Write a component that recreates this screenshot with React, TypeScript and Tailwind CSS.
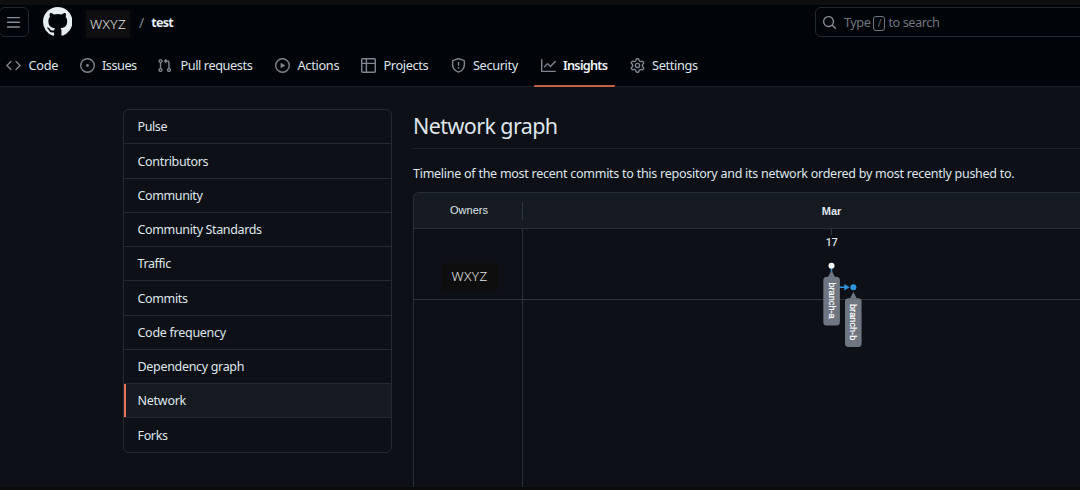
import React from "react";

const PATHS = {
  bars: "M1 2.75A.75.75 0 0 1 1.75 2h12.5a.75.75 0 0 1 0 1.5H1.75A.75.75 0 0 1 1 2.75Zm0 5A.75.75 0 0 1 1.75 7h12.5a.75.75 0 0 1 0 1.5H1.75A.75.75 0 0 1 1 7.75ZM1.75 12h12.5a.75.75 0 0 1 0 1.5H1.75a.75.75 0 0 1 0-1.5Z",
  code: "m11.28 3.22 4.25 4.25a.75.75 0 0 1 0 1.06l-4.25 4.25a.749.749 0 0 1-1.275-.326.749.749 0 0 1 .215-.734L13.94 8l-3.72-3.72a.749.749 0 0 1 .326-1.275.749.749 0 0 1 .734.215Zm-6.56 0a.751.751 0 0 1 1.042.018.751.751 0 0 1 .018 1.042L2.06 8l3.72 3.72a.749.749 0 0 1-.326 1.275.749.749 0 0 1-.734-.215L.47 8.53a.75.75 0 0 1 0-1.06Z",
  issue: "M8 9.5a1.5 1.5 0 1 0 0-3 1.5 1.5 0 0 0 0 3ZM8 0a8 8 0 1 1 0 16A8 8 0 0 1 8 0ZM1.5 8a6.5 6.5 0 1 0 13 0 6.5 6.5 0 0 0-13 0Z",
  pull: "M1.5 3.25a2.25 2.25 0 1 1 3 2.122v5.256a2.251 2.251 0 1 1-1.5 0V5.372A2.25 2.25 0 0 1 1.5 3.25Zm5.677-.177L9.573.677A.25.25 0 0 1 10 .854V2.5h1A2.5 2.5 0 0 1 13.5 5v5.628a2.251 2.251 0 1 1-1.5 0V5a1 1 0 0 0-1-1h-1v1.646a.25.25 0 0 1-.427.177L7.177 3.427a.25.25 0 0 1 0-.354ZM3.75 2.5a.75.75 0 1 0 0 1.5.75.75 0 0 0 0-1.5Zm0 9.5a.75.75 0 1 0 0 1.5.75.75 0 0 0 0-1.5Zm8.25.75a.75.75 0 1 0 1.5 0 .75.75 0 0 0-1.5 0Z",
  play: "M8 0a8 8 0 1 1 0 16A8 8 0 0 1 8 0ZM1.5 8a6.5 6.5 0 1 0 13 0 6.5 6.5 0 0 0-13 0Zm4.879-2.773 4.264 2.559a.25.25 0 0 1 0 .428l-4.264 2.559A.25.25 0 0 1 6 10.559V5.442a.25.25 0 0 1 .379-.215Z",
  table: "M0 1.75C0 .784.784 0 1.75 0h12.5C15.216 0 16 .784 16 1.75v12.5A1.75 1.75 0 0 1 14.25 16H1.75A1.75 1.75 0 0 1 0 14.25ZM6.5 6.5v8h7.75a.25.25 0 0 0 .25-.25V6.5Zm8-1.5V1.75a.25.25 0 0 0-.25-.25H6.5V5Zm-13 1.5v7.75c0 .138.112.25.25.25H5v-8ZM5 5V1.5H1.75a.25.25 0 0 0-.25.25V5Z",
  shield: "M7.467.133a1.748 1.748 0 0 1 1.066 0l5.25 1.68A1.75 1.75 0 0 1 15 3.48V7c0 1.566-.32 3.182-1.303 4.682-.983 1.498-2.585 2.813-5.032 3.855a1.697 1.697 0 0 1-1.33 0c-2.447-1.042-4.049-2.357-5.032-3.855C1.32 10.182 1 8.566 1 7V3.48a1.75 1.75 0 0 1 1.217-1.667Zm.61 1.429a.25.25 0 0 0-.153 0l-5.25 1.68a.25.25 0 0 0-.174.238V7c0 1.358.275 2.666 1.057 3.86.784 1.194 2.121 2.34 4.366 3.297a.196.196 0 0 0 .154 0c2.245-.956 3.582-2.104 4.366-3.298C13.225 9.666 13.5 8.36 13.5 7V3.48a.251.251 0 0 0-.174-.237l-5.25-1.68ZM8.75 4.75v3a.75.75 0 0 1-1.5 0v-3a.75.75 0 0 1 1.5 0ZM9 10.5a1 1 0 1 1-2 0 1 1 0 0 1 2 0Z",
  graph: "M1.5 1.75V13.5h13.75a.75.75 0 0 1 0 1.5H.75a.75.75 0 0 1-.75-.75V1.75a.75.75 0 0 1 1.5 0Zm14.28 2.53-5.25 5.25a.75.75 0 0 1-1.06 0L7 7.06 4.28 9.78a.751.751 0 0 1-1.042-.018.751.751 0 0 1-.018-1.042l3.25-3.25a.75.75 0 0 1 1.06 0L10 7.94l4.72-4.72a.751.751 0 0 1 1.042.018.751.751 0 0 1 .018 1.042Z",
  gear: "M8 0a8.2 8.2 0 0 1 .701.031C9.444.095 9.99.645 10.16 1.29l.288 1.107c.018.066.079.158.212.224.231.114.454.243.668.386.123.082.233.09.299.071l1.103-.303c.644-.176 1.392.021 1.82.63.27.385.506.792.704 1.218.315.675.111 1.422-.364 1.891l-.814.806c-.049.048-.098.147-.088.294.016.257.016.515 0 .772-.01.147.038.246.088.294l.814.806c.475.469.679 1.216.364 1.891a7.977 7.977 0 0 1-.704 1.217c-.428.61-1.176.807-1.82.63l-1.102-.302c-.067-.019-.177-.011-.3.071a5.909 5.909 0 0 1-.668.386c-.133.066-.194.158-.211.224l-.29 1.106c-.168.646-.715 1.196-1.458 1.26a8.006 8.006 0 0 1-1.402 0c-.743-.064-1.289-.614-1.458-1.26l-.289-1.106c-.018-.066-.079-.158-.212-.224a5.738 5.738 0 0 1-.668-.386c-.123-.082-.233-.09-.299-.071l-1.103.303c-.644.176-1.392-.021-1.82-.63a8.12 8.12 0 0 1-.704-1.218c-.315-.675-.111-1.422.363-1.891l.815-.806c.05-.048.098-.147.088-.294a6.214 6.214 0 0 1 0-.772c.01-.147-.038-.246-.088-.294l-.815-.806C.635 6.045.431 5.298.746 4.623a7.92 7.92 0 0 1 .704-1.217c.428-.61 1.176-.807 1.82-.63l1.102.302c.067.019.177.011.3-.071.214-.143.437-.272.668-.386.133-.066.194-.158.211-.224l.29-1.106C6.009.645 6.556.095 7.299.03 7.53.01 7.764 0 8 0Zm-.571 1.525c-.036.003-.108.036-.137.146l-.289 1.105c-.147.561-.549.967-.998 1.189-.173.086-.34.183-.5.29-.417.278-.97.423-1.529.27l-1.103-.303c-.109-.03-.175.016-.195.045-.22.312-.412.644-.573.99-.014.031-.021.11.059.19l.815.806c.411.406.562.957.53 1.456a4.709 4.709 0 0 0 0 .582c.032.499-.119 1.05-.53 1.456l-.815.806c-.081.08-.073.159-.059.19.162.346.353.677.573.989.02.03.085.076.195.046l1.102-.303c.56-.153 1.113-.008 1.53.27.161.107.328.204.501.29.447.222.85.629.997 1.189l.289 1.105c.029.109.101.143.137.146a6.6 6.6 0 0 0 1.142 0c.036-.003.108-.036.137-.146l.289-1.105c.147-.561.549-.967.998-1.189.173-.086.34-.183.5-.29.417-.278.97-.423 1.529-.27l1.103.303c.109.029.175-.016.195-.045.22-.313.411-.644.573-.99.014-.031.021-.11-.059-.19l-.815-.806c-.411-.406-.562-.957-.53-1.456a4.709 4.709 0 0 0 0-.582c-.032-.499.119-1.05.53-1.456l.815-.806c.081-.08.073-.159.059-.19a6.464 6.464 0 0 0-.573-.989c-.02-.03-.085-.076-.195-.046l-1.102.303c-.56.153-1.113.008-1.53-.27a4.44 4.44 0 0 0-.501-.29c-.447-.222-.85-.629-.997-1.189l-.289-1.105c-.029-.11-.101-.143-.137-.146a6.6 6.6 0 0 0-1.142 0ZM11 8a3 3 0 1 1-6 0 3 3 0 0 1 6 0ZM9.5 8a1.5 1.5 0 1 0-3.001.001A1.5 1.5 0 0 0 9.5 8Z",
  mark: "M8 0c4.42 0 8 3.58 8 8a8.013 8.013 0 0 1-5.45 7.59c-.4.08-.55-.17-.55-.38 0-.27.01-1.13.01-2.2 0-.75-.25-1.23-.54-1.48 1.78-.2 3.65-.88 3.65-3.95 0-.88-.31-1.59-.82-2.15.08-.2.36-1.02-.08-2.12 0 0-.67-.22-2.2.82-.64-.18-1.32-.27-2-.27-.68 0-1.36.09-2 .27-1.53-1.03-2.2-.82-2.2-.82-.44 1.1-.16 1.92-.08 2.12-.51.56-.82 1.28-.82 2.15 0 3.06 1.86 3.75 3.64 3.95-.23.2-.44.55-.51 1.07-.46.21-1.61.55-2.33-.66-.15-.24-.6-.83-1.23-.82-.67.01-.27.38.01.53.34.19.73.9.82 1.13.16.45.68 1.31 2.69.94 0 .67.01 1.3.01 1.49 0 .21-.15.45-.55.38A7.995 7.995 0 0 1 0 8c0-4.42 3.58-8 8-8Z",
  search: "M10.68 11.74a6 6 0 0 1-7.922-8.982 6 6 0 0 1 8.982 7.922l3.04 3.04a.749.749 0 0 1-.326 1.275.749.749 0 0 1-.734-.215ZM11.5 7a4.499 4.499 0 1 0-8.997 0A4.499 4.499 0 0 0 11.5 7Z",
};

function Icon({ name, className }: { name: keyof typeof PATHS; className: string }) {
  return (
    <svg viewBox="0 0 16 16" fill="currentColor" className={`shrink-0 ${className}`}>
      <path d={PATHS[name]} />
    </svg>
  );
}

type Tab = { label: string; icon: keyof typeof PATHS; box: string; text: string; active?: boolean };

const tabs: Tab[] = [
  { label: "Code", icon: "code", box: "w-[73.5px]", text: "tracking-[-0.25px]" },
  { label: "Issues", icon: "issue", box: "w-[77.5px]", text: "tracking-[-0.5px]" },
  { label: "Pull requests", icon: "pull", box: "w-[118px]", text: "tracking-[-0.43px] pl-px" },
  { label: "Actions", icon: "play", box: "w-[86px]", text: "tracking-[-0.3px]" },
  { label: "Projects", icon: "table", box: "w-[89.5px]", text: "tracking-[-0.38px]" },
  { label: "Security", icon: "shield", box: "w-[90px]", text: "tracking-[-0.38px]" },
  { label: "Insights", icon: "graph", box: "w-[89px]", text: "tracking-[-0.75px] font-semibold text-[#eef3f8]", active: true },
  { label: "Settings", icon: "gear", box: "w-[90px]", text: "tracking-[-0.35px]" },
];

const menu = [
  { label: "Pulse", text: "tracking-[-0.4px]" },
  { label: "Contributors", text: "tracking-[-0.33px]" },
  { label: "Community", text: "tracking-[-0.38px]" },
  { label: "Community Standards", text: "tracking-[-0.36px]" },
  { label: "Traffic", text: "tracking-[-0.4px]" },
  { label: "Commits", text: "tracking-[-0.35px]" },
  { label: "Code frequency", text: "tracking-[-0.28px]" },
  { label: "Dependency graph", text: "tracking-[-0.32px]" },
  { label: "Network", text: "tracking-[-0.25px]", active: true },
  { label: "Forks", text: "tracking-[-0.35px]" },
];

function Header() {
  return (
    <header className="h-[87px] shrink-0 border-b border-[#1c2026] bg-[#010409]">
      <div className="h-[5px] bg-[#0e0e0e]" />
      <div className="flex h-[34px] items-center">
        <button className="-ml-[1.5px] flex h-[30px] w-[30px] shrink-0 items-center justify-center rounded-md border border-[#24282e]">
          <Icon name="bars" className="h-[15px] w-[15px] text-[#848d97]" />
        </button>
        <Icon name="mark" className="ml-[14px] h-[29.5px] w-[29.5px] text-[#e6edf3]" />
        <div className="ml-[14px] mt-[4px] flex h-[28px] w-[44px] items-center bg-[#0e0e0e] pl-[4px] text-[13.5px] font-light tracking-[0.4px] text-[#e4e4e4]">WXYZ</div>
        <span className="ml-[9px] mt-px text-[14px] text-[#7d8590]">/</span>
        <span className="ml-[7px] mt-[2px] text-[12.5px] font-bold tracking-[-0.7px] text-[#e6edf3]">test</span>
        <div className="-mr-3 ml-auto flex h-[30px] w-[277px] items-center rounded-md border border-[#25292f] pl-[6px] text-[12.75px] tracking-[-0.25px] text-[#6f7680]">
          <Icon name="search" className="h-[15px] w-[15px] text-[#848d97]" />
          <span className="ml-[7px] mt-px tracking-[-0.5px]">Type</span>
          <span className="ml-[3px] mt-[2px] flex h-[15px] w-[12px] items-center justify-center rounded-[3px] border border-[#6e7681] text-[10px]">/</span>
          <span className="ml-[3px] mt-px tracking-[-0.45px]">to search</span>
        </div>
      </div>
      <nav className="flex h-[48px] pl-[6px]">
        {tabs.map((t) => (
          <div key={t.label} className={`relative flex shrink-0 items-center pt-[5px] ${t.box}`}>
            <Icon name={t.icon} className="h-[15px] w-[15px] text-[#7d8590]" />
            <span className={`ml-[7.5px] whitespace-nowrap text-[12.75px] ${t.text}`}>{t.label}</span>
            {t.active && <div className="absolute bottom-0 left-[-7px] h-[2px] w-[81px] rounded-full bg-[#c65f48]" />}
          </div>
        ))}
      </nav>
    </header>
  );
}

function Sidebar() {
  return (
    <aside className="mt-[22px] ml-[123px] h-[344px] w-[269px] shrink-0 overflow-hidden rounded-md border border-[#252a31]">
      {menu.map((m, i) => (
        <div
          key={m.label}
          className={`flex items-center pt-[2px] pl-[13.5px] text-[12.5px] ${i ? "h-[34.25px] border-t border-[#252a31]" : "h-[33.4px]"} ${
            m.active ? "bg-[#161b22] shadow-[inset_2px_0_0_#e5705b]" : ""
          }`}
        >
          <span className={`whitespace-nowrap ${m.text}`}>{m.label}</span>
        </div>
      ))}
    </aside>
  );
}

function Graph() {
  return (
    <svg className="block h-[258px] w-[557px] shrink-0" viewBox="523 229 557 258">
      <path d="M831.5 229v6" stroke="#30363d" />
      <text x="831.7" y="246" textAnchor="middle" fontSize="10.5" fontWeight="500" fill="#dfe5eb" fontFamily="Roboto, Liberation Sans, sans-serif">17</text>
      <path d="M523 299.5h557" stroke="#30363d" />
      <path d="M831.5 266v21.3h14" fill="none" stroke="#2f94dc" strokeWidth="1.4" />
      <path d="M844.3 284.1l5.4 3.2-5.4 3.2z" fill="#2f94dc" />
      <circle cx="831.5" cy="265.7" r="3" fill="#f3f7fa" />
      <circle cx="853.4" cy="287.3" r="3" fill="#2f94dc" />
      <g fill="#6e7681">
        <path d="M831.5 270.5l3.6 6.8h-7.2z" />
        <rect x="823.3" y="276.8" width="16.6" height="48.7" rx="3.5" />
        <path d="M853.4 292l3.6 6.8h-7.2z" />
        <rect x="845" y="298.3" width="16.6" height="48.7" rx="3.5" />
      </g>
      <g fill="#fff" fontSize="9.2" fontFamily="Liberation Sans, sans-serif" stroke="#fff" strokeWidth="0.2">
        <text transform="translate(828.7 282.4) rotate(90)">branch-a</text>
        <text transform="translate(850.4 304) rotate(90)">branch-b</text>
      </g>
    </svg>
  );
}

export default function App() {
  return (
    <div className="flex h-[490px] w-[1080px] flex-col overflow-hidden bg-[#0d1117] font-['Noto_Sans','Open_Sans',sans-serif] text-[12.75px] text-[#dfe5eb]">
      <Header />
      <div className="flex h-[400px] shrink-0">
        <Sidebar />
        <main className="ml-[21px] flex w-[667px] shrink-0 flex-col">
          <h1 className="mt-[21px] h-[41px] border-b border-[#1d2229] text-[21.5px] leading-[36px] font-normal tracking-[-0.6px]">Network graph</h1>
          <p className="mt-[14px] h-[20px] text-[12.5px] leading-[22px] tracking-[-0.26px] whitespace-nowrap">
            Timeline of the most recent commits to this repository and its network ordered by most recently pushed to.
          </p>
          <section className="mt-[9px] h-[295px] overflow-hidden rounded-tl-md border-t border-l border-[#2a3037]">
            <div className="flex h-[36px] items-center border-b border-[#2a3037] bg-[#161b22]">
              <div className="flex h-[18px] w-[109px] shrink-0 items-center justify-center border-r border-[#30363d] pb-px pl-[2px] font-['Liberation_Sans'] text-[11px]">Owners</div>
              <div className="w-[617px] shrink-0 pt-px text-center font-['Liberation_Sans'] text-[11px] font-bold">Mar</div>
            </div>
            <div className="flex h-[258px]">
              <div className="w-[109px] shrink-0 border-r border-[#2a3037]">
                <div className="flex h-[71px] items-center justify-center border-b border-[#2a3037] pt-[25px] pl-[3px]">
                  <div className="flex h-[28px] w-[56px] items-center justify-center bg-[#0e0e0e] text-[13.5px] font-light tracking-[0.4px] text-[#e4e4e4]">WXYZ</div>
                </div>
              </div>
              <Graph />
            </div>
          </section>
        </main>
      </div>
      <div className="h-[3px] shrink-0 bg-[#0b0a0a]" />
    </div>
  );
}
